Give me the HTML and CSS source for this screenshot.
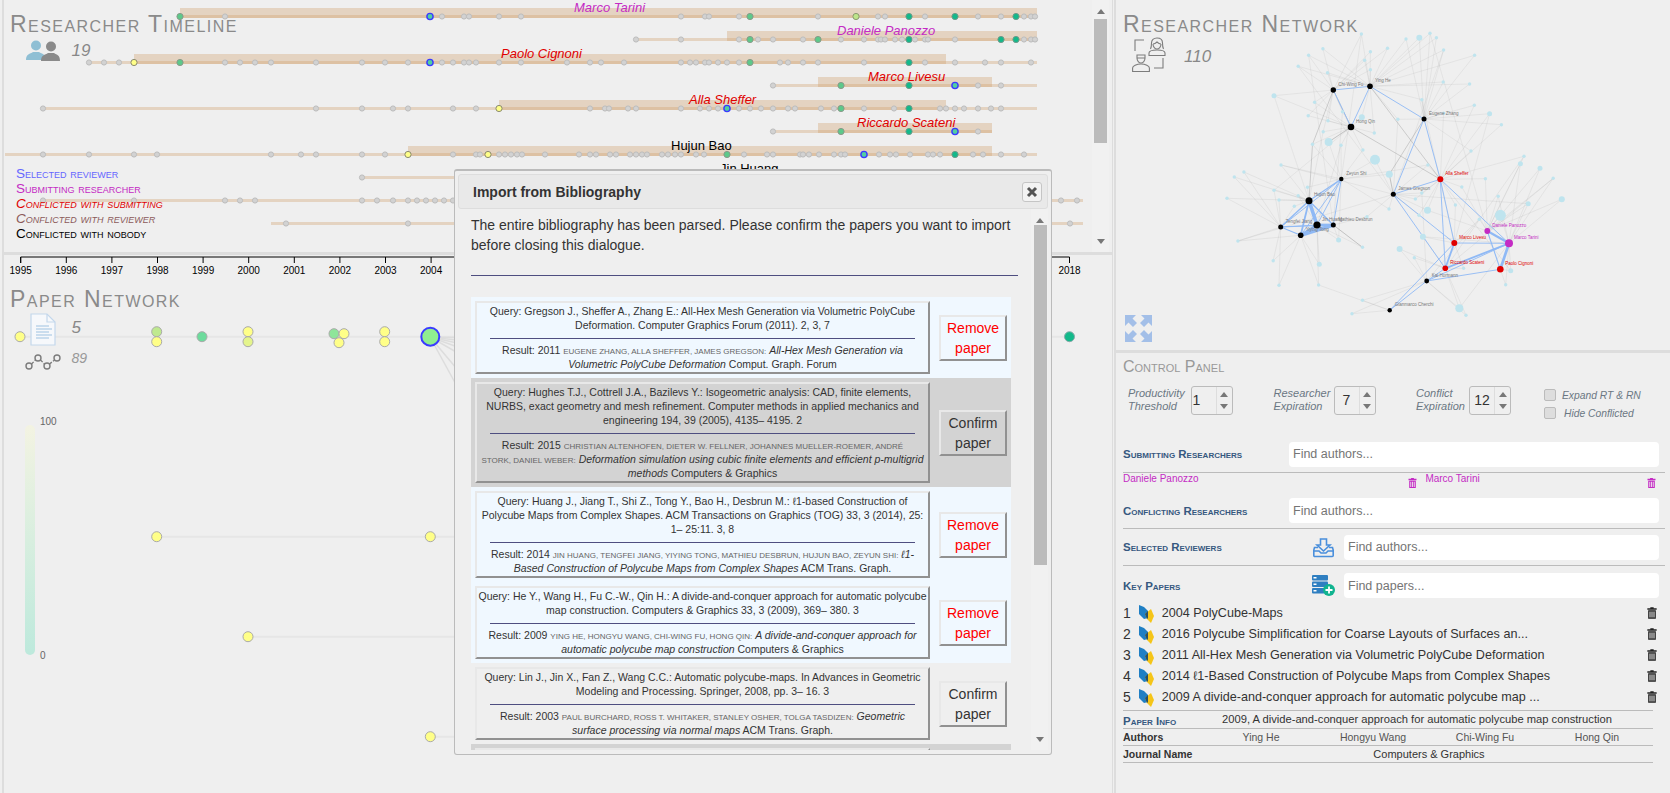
FILE: index.html
```html
<!DOCTYPE html>
<html lang="en">
<head>
  <meta charset="UTF-8">
  <title>Reviewer Finder</title>
  <link rel="stylesheet" href="styles.css">
</head>
<body>

  <svg class="defs">
    <symbol id="trash" viewBox="0 0 12 14">
      <path fill-rule="evenodd" d="M4 0h4v1.2h3.6V3H.4V1.2H4zM1.4 3.8h9.2V14H1.4zM3 5.3v7.2h1.2V5.3zM5.4 5.3v7.2h1.2V5.3zM7.8 5.3v7.2H9V5.3z"/>
    </symbol>
    <symbol id="polycube" viewBox="0 0 15 18">
      <path fill="#1f7fc4" d="M0 0l5 2 4 4v7l-4 1-5-5z"/>
      <path fill="#f5c518" d="M12 4l3 7-3 7-4-4-2-5z"/>
      <path fill="#27506b" d="M6 9l3-3v7l-1 1z"/>
    </symbol>
  </svg>

  <div class="left">
    <section class="timeline">
      <svg class="canvas" id="timelineCanvas" width="1112" height="252" viewBox="0 0 1112 252"></svg>
      <h1 class="panel-title">Researcher Timeline</h1>
      <div class="stat stat-main">
        <span class="stat-icon">
          <svg width="34" height="21" viewBox="0 0 34 21">
            <g fill="#8fbfd4"><circle cx="10" cy="5.500" r="5"/><path d="M0 20c0-6 4-6 7-8h6c3 2 7 2 7 8z"/></g>
            <g fill="#8a8a8a"><circle cx="25" cy="6.500" r="5"/><path d="M15 21c0-6 4-6 7-8h6c3 2 6 2 6 8z"/></g>
          </svg>
        </span>
        <span class="count">19</span>
      </div>
      <ul class="legend">
        <li class="legend-selected">Selected reviewer</li>
        <li class="legend-submitting">Submitting researcher</li>
        <li class="legend-conflict">Conflicted with submitting</li>
        <li class="legend-reviewer">Conflicted with reviewer</li>
        <li class="legend-nobody">Conflicted with nobody</li>
      </ul>
      <div class="scrollbar timeline-scroll">
        <i class="arrow-up"></i>
        <b class="thumb"></b>
        <i class="arrow-down"></i>
      </div>
    </section>

    <section class="papers">
      <svg class="canvas" id="paperCanvas" width="1112" height="538" viewBox="0 255 1112 538"></svg>
      <h1 class="panel-title">Paper Network</h1>
      <div class="stat stat-main stat-doc">
        <span class="stat-icon">
          <svg width="26" height="33" viewBox="0 0 26 33" fill="none" stroke="#c3d7ec" stroke-width="1.2">
            <path fill="#f6f8fb" d="M1 1h16l8 8v23H1z"/>
            <path d="M17 1v8h8"/>
            <path stroke="#bcd3ea" stroke-width="1.400" d="M6 13h13M6 16h16M6 19h13M6 22h16M6 25h13"/>
          </svg>
        </span>
        <span class="count">5</span>
      </div>
      <div class="stat stat-main stat-links">
        <span class="stat-icon">
          <svg width="36" height="18" viewBox="0 0 36 18" fill="none" stroke="#7c7c7c" stroke-width="1.400">
            <circle cx="4" cy="13" r="3"/><circle cx="13" cy="5" r="3"/><circle cx="22" cy="13" r="3"/><circle cx="32" cy="5" r="3"/>
            <path stroke-dasharray="3 1.500" d="M6.500 11l4-4M15.500 7l4 4M24.500 11l5-4"/>
          </svg>
        </span>
        <span class="count count-small">89</span>
      </div>
      <div class="gradient-legend">
        <span class="gradient-bar"></span>
        <span class="gradient-max">100</span>
        <span class="gradient-min">0</span>
      </div>
    </section>
  </div>

  <aside class="right">
    <section class="network">
      <svg class="canvas" id="networkCanvas" width="554" height="350" viewBox="1116 0 554 350"></svg>
      <h1 class="panel-title">Researcher Network</h1>
      <div class="stat stat-network">
        <span class="stat-icon">
          <svg width="35" height="35" viewBox="0 0 35 35" fill="none" stroke="#7c7c7c" stroke-width="1.100">
            <path d="M18.500 12c1-2 1-3 1-6 0-3 2-5 5.500-5s5.500 2 5.500 5c0 3 0 4 1 6"/>
            <path d="M21 7c2 0 3-1 4-2 1 1 2 2 4 2M21 7c0 3 2 5 4 5s4-2 4-5"/>
            <path d="M17 18.500v-2.500c0-2 4-3 8-3s8 1 8 3v2.500z"/>
            <path d="M3 14V3h9M31 21v10h-9"/>
            <path d="M5 18h8v3H5zM5 21c0 3 2 5 4 5s4-2 4-5"/>
            <path d="M.6 34.500v-3.500c0-2 4-4 8.400-4s8.400 2 8.400 4v3.500z"/>
          </svg>
        </span>
        <span class="count">110</span>
      </div>
      <svg class="expand" width="27" height="27" viewBox="0 0 27 27" fill="#a3bfe8">
        <path d="M0 0h11L7.500 3.500l4.500 4.500-4 4-4.500-4.500L0 11z"/>
        <path d="M27 0H16l3.500 3.500L15 8l4 4 4.500-4.500L27 11z"/>
        <path d="M0 27h11l-3.500-3.500L12 19l-4-4-4.500 4.500L0 16z"/>
        <path d="M27 27H16l3.500-3.500L15 19l4-4 4.500 4.500L27 16z"/>
      </svg>
    </section>

    <section class="control">
      <h2 class="control-title">Control Panel</h2>

      <div class="params">
        <div class="param">
          <label class="param-label">Productivity Threshold</label>
          <div class="spin spin-left"><span class="spin-value">1</span><span class="spin-arrows"><i class="arrow-up"></i><i class="arrow-down"></i></span></div>
        </div>
        <div class="param param-mid">
          <label class="param-label">Researcher Expiration</label>
          <div class="spin"><span class="spin-value">7</span><span class="spin-arrows"><i class="arrow-up"></i><i class="arrow-down"></i></span></div>
        </div>
        <div class="param param-narrow">
          <label class="param-label">Conflict Expiration</label>
          <div class="spin"><span class="spin-value">12</span><span class="spin-arrows"><i class="arrow-up"></i><i class="arrow-down"></i></span></div>
        </div>
        <div class="checks">
          <label class="check"><input type="checkbox"><span>Expand RT &amp; RN</span></label>
          <label class="check check-hide"><input type="checkbox"><span>Hide Conflicted</span></label>
        </div>
      </div>

      <div class="field field-first">
        <span class="field-label">Submitting Researchers</span>
        <input class="search" placeholder="Find authors...">
      </div>
      <div class="chips">
        <div class="chip"><span>Daniele Panozzo</span><svg class="chip-trash"><use href="#trash"/></svg></div>
        <div class="chip"><span>Marco Tarini</span><svg class="chip-trash"><use href="#trash"/></svg></div>
      </div>
      <div class="field">
        <span class="field-label">Conflicting Researchers</span>
        <input class="search" placeholder="Find authors...">
      </div>
      <div class="field field-icon">
        <span class="field-label">Selected Reviewers</span>
        <svg class="field-glyph" width="21" height="19" viewBox="0 0 21 19" fill="none" stroke="#4a8fdc" stroke-width="1.600">
          <path d="M7.500 1h6v6h3.500l-6.500 6-6.500-6h3.500z"/>
          <path d="M5 9.500H1.500L.8 12v5.500a1 1 0 0 0 1 1h17.400a1 1 0 0 0 1-1V12l-.7-2.500H16"/>
          <path d="M1 13h5l2 2h5l2-2h5"/>
        </svg>
        <input class="search" placeholder="Find authors...">
      </div>
      <div class="field field-icon field-plain">
        <span class="field-label">Key Papers</span>
        <svg class="field-glyph" width="23" height="21" viewBox="0 0 23 21">
          <g fill="#2f7fc1">
            <rect width="16" height="5.500" rx="1"/><rect y="6.500" width="16" height="5.500" rx="1"/><rect y="13" width="16" height="5.500" rx="1"/>
          </g>
          <g fill="#fff"><rect x="1.500" y="2" width="3" height="1.500"/><rect x="1.500" y="8.500" width="3" height="1.500"/><rect x="1.500" y="15" width="3" height="1.500"/></g>
          <circle cx="17" cy="15" r="6" fill="#10b38f"/>
          <path stroke="#fff" stroke-width="1.800" d="M17 11.500v7M13.500 15h7"/>
        </svg>
        <input class="search" placeholder="Find papers...">
      </div>

      <ol class="key-papers">
        <li class="key-paper"><span class="key-num">1</span><svg class="key-icon"><use href="#polycube"/></svg><span class="key-title">2004 PolyCube-Maps</span><svg class="key-trash"><use href="#trash"/></svg></li>
        <li class="key-paper"><span class="key-num">2</span><svg class="key-icon"><use href="#polycube"/></svg><span class="key-title">2016 Polycube Simplification for Coarse Layouts of Surfaces an...</span><svg class="key-trash"><use href="#trash"/></svg></li>
        <li class="key-paper"><span class="key-num">3</span><svg class="key-icon"><use href="#polycube"/></svg><span class="key-title">2011 All-Hex Mesh Generation via Volumetric PolyCube Deformation</span><svg class="key-trash"><use href="#trash"/></svg></li>
        <li class="key-paper"><span class="key-num">4</span><svg class="key-icon"><use href="#polycube"/></svg><span class="key-title">2014 ℓ1-Based Construction of Polycube Maps from Complex Shapes</span><svg class="key-trash"><use href="#trash"/></svg></li>
        <li class="key-paper"><span class="key-num">5</span><svg class="key-icon"><use href="#polycube"/></svg><span class="key-title">2009 A divide-and-conquer approach for automatic polycube map ...</span><svg class="key-trash"><use href="#trash"/></svg></li>
      </ol>

      <div class="info">
        <div class="info-head">
          <span class="field-label">Paper Info</span>
          <span class="info-title">2009, A divide-and-conquer approach for automatic polycube map construction</span>
        </div>
        <div class="info-row">
          <b>Authors</b><span>Ying He</span><span>Hongyu Wang</span><span>Chi-Wing Fu</span><span>Hong Qin</span>
        </div>
        <div class="info-row">
          <b>Journal Name</b><span class="info-journal">Computers &amp; Graphics</span>
        </div>
      </div>
    </section>
  </aside>

  <div class="dialog">
    <div class="dialog-bar">
      <span class="dialog-title">Import from Bibliography</span>
      <button class="dialog-close">
        <svg width="12" height="12" viewBox="0 0 12 12"><path stroke="#555" stroke-width="3" d="M2 2l8 8M10 2l-8 8"/></svg>
      </button>
    </div>
    <div class="dialog-body">
      <p class="dialog-text">The entire bibliography has been parsed. Please confirm the papers you want to import before closing this dialogue.</p>
      <hr class="rule dialog-rule">

      <div class="paper-row paper-kept">
        <div class="paper-box">
          <p>Query: Gregson J., Sheffer A., Zhang E.: All-Hex Mesh Generation via Volumetric PolyCube Deformation. Computer Graphics Forum (2011). 2, 3, 7</p>
          <hr class="rule">
          <p>Result: 2011 <span class="authors">Eugene Zhang, Alla Sheffer, James Gregson:</span> <em>All-Hex Mesh Generation via<br>Volumetric PolyCube Deformation</em> Comput. Graph. Forum</p>
        </div>
        <button class="paper-btn remove">Remove paper</button>
      </div>

      <div class="paper-row paper-dark">
        <div class="paper-box">
          <p>Query: Hughes T.J., Cottrell J.A., Bazilevs Y.: Isogeometric analysis: CAD, finite elements,<br>NURBS, exact geometry and mesh refinement. Computer methods in applied mechanics and engineering 194, 39 (2005), 4135– 4195. 2</p>
          <hr class="rule">
          <p>Result: 2015 <span class="authors">Christian Altenhofen, Dieter W. Fellner, Johannes Mueller-Roemer, André<br>Stork, Daniel Weber:</span> <em>Deformation simulation using cubic finite elements and efficient p-multigrid methods</em> Computers &amp; Graphics</p>
        </div>
        <button class="paper-btn">Confirm paper</button>
      </div>

      <div class="paper-row paper-kept">
        <div class="paper-box">
          <p>Query: Huang J., Jiang T., Shi Z., Tong Y., Bao H., Desbrun M.: ℓ1-based Construction of Polycube Maps from Complex Shapes. ACM Transactions on Graphics (TOG) 33, 3 (2014), 25: 1– 25:11. 3, 8</p>
          <hr class="rule">
          <p>Result: 2014 <span class="authors">Jin Huang, Tengfei Jiang, Yiying Tong, Mathieu Desbrun, Hujun Bao, Zeyun Shi:</span> <em>ℓ1-<br>Based Construction of Polycube Maps from Complex Shapes</em> ACM Trans. Graph.</p>
        </div>
        <button class="paper-btn remove">Remove paper</button>
      </div>

      <div class="paper-row paper-kept">
        <div class="paper-box">
          <p>Query: He Y., Wang H., Fu C.-W., Qin H.: A divide-and-conquer approach for automatic polycube<br>map construction. Computers &amp; Graphics 33, 3 (2009), 369– 380. 3</p>
          <hr class="rule">
          <p>Result: 2009 <span class="authors">Ying He, Hongyu Wang, Chi-Wing Fu, Hong Qin:</span> <em>A divide-and-conquer approach for<br>automatic polycube map construction</em> Computers &amp; Graphics</p>
        </div>
        <button class="paper-btn remove">Remove paper</button>
      </div>

      <div class="paper-row">
        <div class="paper-box">
          <p>Query: Lin J., Jin X., Fan Z., Wang C.C.: Automatic polycube-maps. In Advances in Geometric Modeling and Processing. Springer, 2008, pp. 3– 16. 3</p>
          <hr class="rule">
          <p>Result: 2003 <span class="authors">Paul Burchard, Ross T. Whitaker, Stanley Osher, Tolga Tasdizen:</span> <em>Geometric<br>surface processing via normal maps</em> ACM Trans. Graph.</p>
        </div>
        <button class="paper-btn">Confirm paper</button>
      </div>

      <div class="paper-row paper-dark">
        <div class="paper-box paper-box-empty"></div>
      </div>

      <div class="scrollbar dialog-scroll">
        <i class="arrow-up"></i>
        <b class="thumb"></b>
        <i class="arrow-down"></i>
      </div>
    </div>
  </div>

  <script src="script.js"></script>
</body>
</html>
```

FILE: styles.css
```css
* {
  box-sizing: border-box;
}

html, body {
  height: 100%;
}

body {
  margin: 0;
  display: flex;
  overflow: hidden;
  background: #efefef;
  color: #333;
  font-family: "Liberation Sans", Arial, sans-serif;
}

.defs {
  position: absolute;
  width: 0;
  height: 0;
}

.left {
  width: 1111px;
  margin-left: 2px;
  border-left: 2px solid #ddd;
  border-right: 1px solid #ddd;
  display: flex;
  flex-direction: column;
}

.right {
  flex: 1;
  margin-left: 1px;
  border-left: 2px solid #ddd;
}

.timeline {
  position: relative;
  height: 255px;
  padding-top: 11px;
  border-bottom: 3px solid #ddd;
}

.papers {
  position: relative;
  flex: 1;
  padding-top: 31px;
}

.canvas {
  position: absolute;
  top: 0;
  left: -4px;
}

.network .canvas {
  left: 0;
}

.panel-title {
  position: relative;
  margin: 0 0 0 7px;
  font-size: 23px;
  line-height: 26px;
  font-weight: normal;
  font-variant: small-caps;
  letter-spacing: 1.45px;
  color: #8a8a8a;
}

.papers .panel-title {
  margin-left: 6px;
}

.timeline .panel-title {
  margin-left: 6px;
}

.stat {
  position: relative;
  display: flex;
  align-items: center;
}

.stat-icon svg {
  display: block;
}

.stat-main {
  padding-left: 22px;
  margin-top: 3px;
}

.stat-main .stat-icon {
  width: 45.5px;
}

.stat-doc {
  margin-top: 1px;
  align-items: flex-start;
}

.stat-doc .stat-icon svg {
  margin-left: 4px;
}

.stat-doc .count {
  margin-top: 5px;
}

.stat-links {
  margin-top: 7px;
  align-items: flex-start;
}

.stat-links .stat-icon svg {
  margin-left: -1px;
}

.stat-links .count {
  margin-top: -3px;
}

.stat-network {
  padding-left: 16px;
}

.stat-network .stat-icon {
  width: 52px;
}

.stat-network .count {
  margin-top: 4px;
}

.count {
  font-size: 17px;
  line-height: 20px;
  font-style: italic;
  color: #888;
}

.count-small {
  font-size: 14px;
  line-height: 16px;
  color: #999;
}

.legend {
  position: absolute;
  top: 166px;
  left: 12px;
  margin: 0;
  padding: 0;
  list-style: none;
  font-size: 13.5px;
  line-height: 15px;
  font-variant: small-caps;
}

.legend-selected { color: #6666ff; }
.legend-submitting { color: #c42bc4; }
.legend-conflict { color: #e00000; font-style: italic; }
.legend-reviewer { color: #8b5a5a; font-style: italic; }
.legend-nobody { color: #000; }

.scrollbar {
  position: absolute;
  background: #f1f1f1;
}

.scrollbar .thumb {
  position: absolute;
  left: 2px;
  width: 13px;
  background: #bbb;
}

.timeline-scroll {
  top: 0;
  left: 1088px;
  width: 17px;
  height: 252px;
}

.timeline-scroll .thumb {
  top: 19px;
  height: 124px;
}

.arrow-up, .arrow-down {
  display: block;
  width: 0;
  height: 0;
  border-left: 4px solid transparent;
  border-right: 4px solid transparent;
}

.arrow-up {
  border-bottom: 5px solid #777;
}

.arrow-down {
  border-top: 5px solid #777;
}

.scrollbar .arrow-up, .scrollbar .arrow-down {
  position: absolute;
  left: 4.5px;
}

.scrollbar .arrow-up {
  top: 9px;
}

.scrollbar .arrow-down {
  bottom: 8px;
}

.gradient-legend {
  position: absolute;
  top: 170px;
  left: 21px;
  width: 40px;
  height: 240px;
  font-size: 10px;
  color: #666;
}

.gradient-bar {
  display: block;
  width: 10px;
  height: 230px;
  border-radius: 5px;
  background: linear-gradient(to bottom, #f3f3e2, #bde9dc);
}

.gradient-max {
  position: absolute;
  top: -9px;
  left: 15px;
}

.gradient-min {
  position: absolute;
  top: 225px;
  left: 15px;
}

/* right column */

.network {
  position: relative;
  height: 353px;
  padding-top: 11px;
  border-bottom: 3px solid #ddd;
}

.expand {
  position: absolute;
  top: 315px;
  left: 9px;
}

.control {
  padding: 4px 5px 0 7px;
}

.control-title {
  margin: 0;
  font-size: 16px;
  line-height: 20px;
  font-weight: normal;
  font-variant: small-caps;
  color: #999;
}

.params {
  display: grid;
  grid-template-columns: 145.5px 142.5px 128px auto;
  margin-top: 9px;
  padding-left: 5px;
  height: 33px;
}

.param {
  display: flex;
  align-items: flex-start;
}

.param-label {
  width: 62.5px;
  padding-top: 1px;
  font-size: 11px;
  line-height: 13px;
  font-style: italic;
  color: #6b7783;
}

.param-mid .param-label {
  width: 60px;
}

.param-narrow .param-label {
  width: 53px;
}

.spin {
  display: flex;
  width: 42px;
  height: 29px;
  border: 1px solid #bbb;
  border-radius: 3px;
  font-size: 14px;
}

.spin-value {
  width: 24px;
  line-height: 27px;
  text-align: center;
}

.spin-left .spin-value {
  padding-left: 1px;
  text-align: left;
}

.spin-arrows {
  flex: 1;
  border-left: 1px solid #ddd;
  display: flex;
  flex-direction: column;
  align-items: center;
  justify-content: center;
  gap: 7px;
}

.check {
  display: flex;
  align-items: center;
  height: 18px;
  font-size: 10.3px;
  font-style: italic;
  color: #6b7783;
}

.check input {
  appearance: none;
  width: 12px;
  height: 12px;
  margin: 0 6px 0 0;
  border: 1px solid #bbb;
  border-radius: 2px;
  background: #ddd;
}

.check-hide span {
  margin-left: 2px;
}

.field {
  display: flex;
  align-items: center;
  height: 36.5px;
  padding-top: 1px;
  border-bottom: 1px solid #bbb;
}

.field-first {
  margin-top: 17px;
}

.field-label {
  width: 166px;
  flex: none;
  font-size: 11.5px;
  font-weight: bold;
  font-variant: small-caps;
  color: #36587f;
}

.search {
  flex: 1;
  height: 25px;
  margin-right: 6.4px;
  padding: 0 4px;
  border: none;
  border-radius: 4px;
  background: #fff;
  font: 12.5px "Liberation Sans", Arial, sans-serif;
}

.search::placeholder {
  color: #757575;
}

.field-icon .field-label {
  width: 189px;
}

.field-glyph {
  flex: none;
  width: 32px;
  padding-right: 9px;
  overflow: visible;
}

.field-plain {
  border-bottom: none;
  height: 39px;
}

.chips {
  display: grid;
  grid-template-columns: 294px 1fr;
  gap: 8.4px;
  height: 20px;
  padding-right: 9px;
}

.chip {
  display: flex;
  justify-content: space-between;
  font-size: 10px;
  line-height: 12px;
  color: #c42bc4;
}

.chip-trash {
  width: 9px;
  height: 10px;
  margin-top: 5px;
  fill: #c42bc4;
}

.key-papers {
  margin: -2.5px 0 4px;
  padding: 0;
  list-style: none;
}

.key-paper {
  display: flex;
  align-items: center;
  height: 21px;
  font-size: 12.6px;
}

.key-num {
  width: 15.6px;
  font-size: 14px;
}

.key-icon {
  width: 15px;
  height: 18px;
  margin-bottom: -2px;
}

.key-title {
  flex: 1;
  margin-left: 8.2px;
  white-space: nowrap;
}

.key-trash {
  width: 10px;
  height: 12px;
  margin-right: 8.5px;
  fill: #222;
}

.info {
  width: 530px;
  box-shadow: 0 -1px 0 #bbb;
  border-top: 1px solid transparent;
}

.info-head {
  display: flex;
  align-items: flex-start;
  height: 17px;
  border-bottom: 1px solid #bbb;
}

.info-head .field-label {
  width: 99px;
  margin-top: 3px;
  line-height: 13px;
}

.info-title {
  font-size: 11.2px;
  line-height: 13px;
  margin-top: 1px;
  white-space: nowrap;
}

.info-row {
  display: grid;
  grid-template-columns: 82px repeat(4, 112px);
  height: 17px;
  line-height: 16px;
  font-size: 10.5px;
  text-align: center;
  color: #555;
  border-bottom: 1px solid #bbb;
}

.info-row b {
  text-align: left;
  color: #333;
}

.info-row .info-journal {
  grid-column: 2 / 6;
  font-size: 11px;
  color: #333;
}

/* dialog sits on top of the whole page */

.dialog {
  position: absolute;
  top: 169px;
  left: 454px;
  width: 598px;
  height: 586px;
  padding: 3px;
  background: #efefef;
  border: 1px solid #bbb;
  border-top-width: 2px;
  border-radius: 3px;
}

.dialog-bar {
  display: flex;
  align-items: center;
  justify-content: space-between;
  height: 35px;
  padding: 0 5px 0 14px;
  background: #e9e9e9;
  border: 1px solid #ddd;
  border-radius: 3px;
}

.dialog-title {
  font-size: 14px;
  font-weight: bold;
}

.dialog-close {
  display: flex;
  align-items: center;
  justify-content: center;
  width: 20px;
  height: 20px;
  padding: 0;
  background: #f3f3f3;
  border: 1px solid #c5c5c5;
  border-radius: 3px;
}

.dialog-body {
  position: relative;
  height: 541px;
  padding: 6px 0 0 13px;
  overflow: hidden;
}

.dialog-text {
  width: 552px;
  margin: 0;
  font-size: 14px;
  line-height: 20px;
}

.rule {
  height: 1px;
  margin: 0;
  border: none;
  background: #4e4e80;
}

.dialog-rule {
  width: 547px;
  margin: 20px 0 21px;
}

.paper-row {
  display: flex;
  align-items: center;
  gap: 9px;
  width: 540px;
  padding: 4px 0 4px 4px;
}

.paper-kept {
  background: #f0f8ff;
}

.paper-dark {
  background: #d3d3d3;
}

.paper-box, .paper-btn {
  border: 2px solid;
  border-color: #e8e8e8 #919191 #919191 #e8e8e8;
}

.paper-box {
  width: 455px;
  flex: none;
  padding: 1px 1px;
  font-size: 10.5px;
  line-height: 14px;
  text-align: center;
}

.paper-box p {
  margin: 0;
}

.paper-box .rule {
  margin: 6px 12px 4px;
}

.paper-box-empty {
  height: 60px;
}

.authors {
  font-size: 8px;
  line-height: 1;
  text-transform: uppercase;
  color: #666;
}

.paper-btn {
  width: 68px;
  height: 46px;
  padding: 0 6px;
  background: transparent;
  font: 14px/20px "Liberation Sans", Arial, sans-serif;
  color: #333;
}

.remove {
  color: #f00;
}

.dialog-scroll {
  top: 0;
  right: 0;
  width: 17px;
  height: 541px;
}

.dialog-scroll .thumb {
  top: 16px;
  left: 3px;
  height: 340px;
}
```

FILE: script.js
```js
const SVG_NS = 'http://www.w3.org/2000/svg';

function add(parent, tag, attrs, text) {
  const el = document.createElementNS(SVG_NS, tag);
  for (const k in attrs) el.setAttribute(k, attrs[k]);
  if (text) el.textContent = text;
  parent.appendChild(el);
  return el;
}

// ---- timeline ----

const MAGENTA = '#c42bc4';
const RED = '#e00000';

// nodes: plain number = grey paper, letter prefix = coloured one
const rows = [
  { from: 180, to: 1037, bar: [180, 1037], name: 'Marco Tarini', color: MAGENTA, at: [574, 12],
    nodes: 'g180 225 b430 442 464 469 499 521 681 705 709 739 g750 818 l856 878 885 t909 925 t955 978 1001 t1016 1024 1031 1035' },
  { from: 636, to: 1037, bar: [727, 1037], name: 'Daniele Panozzo', color: MAGENTA, at: [837, 35],
    nodes: '636 681 739 g750 758 773 803 g818 841 864 878 881 885 895 902 t909 915 925 928 955 t1001 t1016 1024 1031 1035' },
  { from: 89, to: 1037, bar: [134, 946], name: 'Paolo Cignoni', color: RED, at: [501, 58],
    nodes: '89 104 119 y134 g180 225 240 255 271 316 362 385 408 b430 442 453 464 469 476 499 521 567 590 601 624 681 690 696 705 709 718 727 739 g750 780 788 803 818 864 t909 925 955 985 1001 1031' },
  { from: 773, to: 1037, bar: [818, 992], name: 'Marco Livesu', color: RED, at: [868, 81],
    nodes: '773 g841 t909 b955 978 1001' },
  { from: 43, to: 1037, bar: [499, 946], name: 'Alla Sheffer', color: RED, at: [689, 104],
    nodes: '43 316 362 393 408 453 476 y499 590 605 609 628 636 681 700 709 718 b727 739 750 761 773 788 795 821 834 g841 864 894 t909 940 946 955 964 978 991 1001' },
  { from: 773, to: 992, bar: [818, 992], name: 'Riccardo Scateni', color: RED, at: [857, 127],
    nodes: '773 g841 t909 b955 978' },
  { from: 5, to: 1037, bar: [408, 992], name: 'Hujun Bao', color: '#000', at: [671, 150], upright: true,
    nodes: '43 89 134 157 271 301 316 362 385 y408 453 476 480 y488 499 505 511 517 522 545 579 590 596 610 616 630 636 642 647 662 668 675 681 696 704 g727 744 767 773 800 803 809 819 834 841 845 b864 879 890 896 910 928 933 940 t955 973 983 1001 1024' },
  { from: 362, to: 1037, name: 'Jin Huang', color: '#000', at: [720, 173], upright: true, nodes: '362' },
  { from: 43, to: 1083, nodes: '43 134 225 240 255 362 377 393 408 417 426 435 444 453 1061 1077' },
  { from: 271, to: 1083, nodes: '286 408 1070' }
];

const nodeFill = {
  g: ['#5dc98a', '#8a9a8a'],
  t: ['#13b98a', '#6f9a8a'],
  y: ['#ffff88', '#8a8a70'],
  l: ['#bde58a', '#8a9a70'],
  b: ['#52cfa0', '#3a3aff']
};

const tl = document.getElementById('timelineCanvas');
rows.forEach((row, i) => {
  const y = 16.5 + i * 23;
  if (row.bar) {
    add(tl, 'rect', { x: row.bar[0], y: y - 8.5, width: row.bar[1] - row.bar[0], height: 10, fill: 'rgba(210,160,110,.35)' });
  }
  add(tl, 'rect', { x: row.from, y: y - 1.5, width: row.to - row.from, height: 3, fill: 'rgba(210,160,110,.35)' });

  row.nodes.split(' ').forEach((n) => {
    const kind = nodeFill[n[0]];
    const x = kind ? +n.slice(1) : +n;
    if (kind) {
      add(tl, 'circle', { cx: x, cy: y, r: 3.1, fill: kind[0], stroke: kind[1], 'stroke-width': n[0] === 'b' ? 1.4 : 1 });
    } else {
      add(tl, 'circle', { cx: x, cy: y, r: 2.6, fill: '#d2d2d2', stroke: '#bdbdbd', 'stroke-width': 1 });
    }
  });

  if (row.name) {
    add(tl, 'text', {
      x: row.at[0], y: row.at[1], fill: row.color, 'font-size': 13,
      'font-style': row.upright ? 'normal' : 'italic'
    }, row.name);
  }
});

// ---- paper network ----

const YELLOW = '#ffff88';
const pc = document.getElementById('paperCanvas');

add(pc, 'path', { d: 'M20.700 263V257H1069.500V263', fill: 'none', stroke: '#000' });
for (let year = 1995; year <= 2018; year++) {
  const x = 20.7 + (year - 1995) * 45.6;
  add(pc, 'line', { x1: x, x2: x, y1: 257, y2: 263, stroke: '#000' });
  add(pc, 'text', { x: x, y: 274, 'text-anchor': 'middle', 'font-size': 10, fill: '#000' }, year);
}

[[20, 1069, 336.7], [157, 760, 536.7], [248, 760, 636.7], [430, 760, 736.7]].forEach((l) => {
  add(pc, 'line', { x1: l[0], x2: l[1], y1: l[2], y2: l[2], stroke: '#e6e6e6', 'stroke-width': 2 });
});
[[560, 340], [560, 352], [560, 366], [560, 384], [540, 400], [500, 420], [470, 410]].forEach((p) => {
  add(pc, 'line', { x1: 430, y1: 337, x2: p[0], y2: p[1], stroke: '#ddd', 'stroke-width': 1.5 });
});

[
  [20, 336.7, YELLOW], [156.7, 331.7, '#bfe98f'], [156.7, 341.7, YELLOW], [202, 336.7, '#6ddb9c'],
  [248, 331.7, YELLOW], [248, 341.7, '#e4f48c'], [334, 333.7, '#8ee59a'], [344, 333.7, YELLOW],
  [339, 342.7, YELLOW], [384.7, 331.7, YELLOW], [384.7, 341.7, YELLOW],
  [156.7, 536.7, YELLOW], [430.3, 536.7, YELLOW], [248, 636.7, YELLOW], [430.3, 736.7, YELLOW]
].forEach((n) => {
  add(pc, 'circle', { cx: n[0], cy: n[1], r: 5, fill: n[2], stroke: '#aaa', 'stroke-width': 1 });
});
add(pc, 'circle', { cx: 430.3, cy: 336.7, r: 9, fill: '#90ee90', stroke: '#3a3aff', 'stroke-width': 2 });
add(pc, 'circle', { cx: 1069.5, cy: 336.7, r: 5, fill: '#13b98a', stroke: '#8aa', 'stroke-width': 1 });

// ---- researcher network ----

const people = {
  chi: ['Chi-Wing Fu', 1333.3, 90, 2.7, '#000'],
  ying: ['Ying He', 1370, 86.3, 2.8, '#000'],
  qin: ['Hong Qin', 1351, 127, 3.3, '#000'],
  eugene: ['Eugene Zhang', 1424, 119, 2.5, '#000'],
  zeyun: ['Zeyun Shi', 1341.3, 179, 2.2, '#000'],
  hujun: ['Hujun Bao', 1309, 200.7, 3.5, '#000'],
  jin: ['Jin Huang', 1317, 225, 3.6, '#000'],
  mathieu: ['Mathieu Desbrun', 1333.3, 225, 2.5, '#000'],
  tengfei: ['Tengfei Jiang', 1280.7, 227, 2.5, '#000'],
  yiying: ['Yiying Tong', 1300.7, 235.3, 2.8, '#000'],
  james: ['James Gregson', 1393.3, 194.3, 2.5, '#000'],
  kai: ['Kai Hormann', 1426.7, 281, 2.4, '#000'],
  cherchi: ['Gianmarco Cherchi', 1389.7, 310.3, 2.2, '#000'],
  alla: ['Alla Sheffer', 1440.3, 179.3, 3, '#e00000'],
  livesu: ['Marco Livesu', 1454.3, 243, 3, '#e00000'],
  scateni: ['Riccardo Scateni', 1445.3, 268.3, 2.8, '#e00000'],
  cignoni: ['Paolo Cignoni', 1500.3, 269.3, 3.3, '#e00000'],
  panozzo: ['Daniele Panozzo', 1487.3, 231, 2.9, MAGENTA],
  tarini: ['Marco Tarini', 1509, 243.3, 4, MAGENTA]
};

const coauthors = [
  [1361.4,34], [1406,39], [1419.3,37.7,3], [1430,33.3], [1436.4,37.7], [1387.5,48.3], [1443.6,50], [1474.6,55.3],
  [1322.9,48.7], [1308.6,55.3], [1370.4,51.7], [1364.6,60.3], [1298.2,66.3], [1327.5,72.7], [1370.4,69.7], [1274,95.7,2.5],
  [1314.6,102.3], [1308.2,115.7], [1342.5,111.7], [1328,120.7], [1361.8,117.3,3], [1397.9,119.3], [1443.2,82], [1469.6,84],
  [1421.8,99.7], [1474.3,105.3], [1443.6,113.3], [1489.6,113.7,2.5], [1501.4,124.7], [1374.3,133], [1323.2,131.7], [1328.6,142,4],
  [1312.5,144.3], [1341,145.3], [1362.9,150], [1375,159.7,5], [1427.9,165], [1471,151], [1389.3,174.3,3.5], [1281,165],
  [1243.9,172], [1234.3,177], [1274,190.3], [1227,198.3], [1279,200], [1298.2,195.7], [1294.3,206.3], [1307.5,187.3],
  [1524,156.3], [1520.4,163.7,2.5], [1540,168.3,2.5], [1553.2,178.3], [1485.4,178.7], [1561.8,199.3,3], [1528.2,203.7,2.5],
  [1498.2,196.3], [1500.4,215.3,5.5], [1479.3,219.3], [1461.8,187], [1455.4,205], [1427.5,210.3,3.5], [1419,215.3],
  [1415.4,199], [1421.8,193], [1389,209], [1367,216.7], [1338.6,240,2.5], [1362.5,247.3], [1399.6,249,3], [1422.9,236.7,3],
  [1414.3,257.7], [1463.6,268.3], [1510.7,270.7,2.5], [1505.7,284.7], [1319.3,264.3,2.5], [1318.6,285], [1279,285.3],
  [1273.2,260.7], [1237.9,241], [1362.5,300.3], [1352,313.7], [1459.3,308.3,4], [1466,315.3]
];

const links = [
  ['chi','ying',1], ['chi','qin',1], ['ying','qin',1], ['ying','eugene',1], ['eugene','james',1], ['eugene','alla',1],
  ['james','alla',1], ['james','livesu',1], ['james','scateni',1], ['alla','livesu',1], ['alla','scateni',1], ['alla','tarini',1],
  ['livesu','scateni',2], ['livesu','tarini',1], ['livesu','cherchi',1], ['scateni','tarini',2], ['scateni','kai',1],
  ['kai','cignoni',1], ['kai','cherchi',1], ['panozzo','tarini',2.5], ['panozzo','cignoni',1.2], ['tarini','cignoni',3],
  ['kai','tarini',1], ['zeyun','hujun',1.2], ['zeyun','tengfei',1], ['zeyun','yiying',1], ['zeyun','mathieu',1], ['zeyun','jin',1],
  ['hujun','jin',4], ['hujun','tengfei',1.5], ['hujun','yiying',2], ['hujun','mathieu',1.5], ['jin','tengfei',1], ['jin','yiying',3],
  ['jin','mathieu',3], ['tengfei','yiying',1.2], ['tengfei','mathieu',1], ['yiying','mathieu',4]
];

const net = document.getElementById('networkCanvas');
const list = Object.values(people);

function dist(a, b) {
  return Math.hypot(a[0] - b[1], a[1] - b[2]);
}

// each coauthor hangs off its two closest researchers, every third one gets a long edge as well
coauthors.forEach((c, i) => {
  const near = list.slice().sort((a, b) => dist(c, a) - dist(c, b));
  const targets = [near[0], near[1]];
  if (i % 3 === 0) targets.push(near[4 + i % 5]);
  targets.forEach((t) => {
    add(net, 'line', { x1: c[0], y1: c[1], x2: t[1], y2: t[2], stroke: 'rgba(140,140,140,.16)', 'stroke-width': 0.8 });
  });
});

[
  [1333.3,90, 1312.5,144.3], [1312.5,144.3, 1309,200.7], [1333.3,90, 1351,127], [1351,127, 1440.3,179.3], [1370,86.3, 1440.3,179.3],
  [1424,119, 1389.3,174.3], [1389.3,174.3, 1393.3,194.3], [1351,127, 1328.6,142], [1333.3,225, 1362.5,247.3]
].forEach((e) => {
  add(net, 'line', { x1: e[0], y1: e[1], x2: e[2], y2: e[3], stroke: 'rgba(120,120,120,.3)', 'stroke-width': 1 });
});

links.forEach((l) => {
  const a = people[l[0]];
  const b = people[l[1]];
  add(net, 'line', { x1: a[1], y1: a[2], x2: b[1], y2: b[2], stroke: '#8fb9f5', 'stroke-width': l[2] * 0.9 });
});

coauthors.forEach((c) => {
  add(net, 'circle', { cx: c[0], cy: c[1], r: c[2] || 1.7, fill: '#bfe4ee' });
});

list.forEach((p) => {
  add(net, 'circle', { cx: p[1], cy: p[2], r: p[3], fill: p[4] });
  add(net, 'text', { x: p[1] + 5, y: p[2] - 4.5, 'font-size': 4.5, fill: p[4] === '#000' ? '#777' : p[4] }, p[0]);
});
```
